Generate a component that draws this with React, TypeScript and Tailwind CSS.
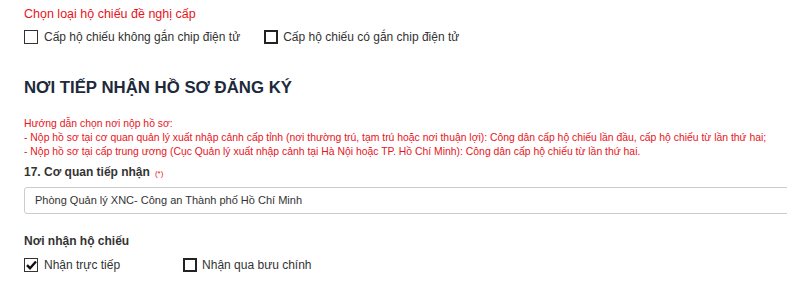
import React from "react";

function Box({ checked = false, thick = false }: { checked?: boolean; thick?: boolean }) {
  return (
    <span
      className={
        "relative inline-flex h-[14px] w-[14px] shrink-0 items-center justify-center bg-white " +
        (thick ? "border-2 border-[#222]" : "border border-[#333]")
      }
    >
      {checked && (
        <svg width="11" height="10" viewBox="0 0 11 10" className="absolute left-[1px] top-[1px]">
          <path d="M1 5.2 L4 8.2 L10 1.5" fill="none" stroke="#111" strokeWidth="2.4" />
        </svg>
      )}
    </span>
  );
}

export default function App() {
  return (
    <div
      className="h-[288px] w-[787px] overflow-hidden bg-white pl-[24px] text-[#333]"
      style={{ fontFamily: '"Liberation Sans", Arial, sans-serif' }}
    >
      <div className="pt-[5px] text-[12.5px] leading-[18px] text-[#e8141b]">Chọn loại hộ chiếu đề nghị cấp</div>
      <div className="mt-[6px] flex items-center text-[12px] leading-[16px]">
        <label className="flex items-center gap-[6px]">
          <Box />
          <span>Cấp hộ chiếu không gắn chip điện tử</span>
        </label>
        <label className="ml-[24px] flex items-center gap-[5px]">
          <Box thick />
          <span>Cấp hộ chiếu có gắn chip điện tử</span>
        </label>
      </div>

      <h2 className="mt-[33px] text-[16.8px] font-bold leading-[20px] text-[#1d2a3b]">NƠI TIẾP NHẬN HỒ SƠ ĐĂNG KÝ</h2>

      <div className="mt-[19px] whitespace-nowrap text-[10.4px] leading-[14px] text-[#e8141b]">
        <div>Hướng dẫn chọn nơi nộp hồ sơ:</div>
        <div>
          - Nộp hồ sơ tại cơ quan quản lý xuất nhập cảnh cấp tỉnh (nơi thường trú, tạm trú hoặc nơi thuận lợi): Công dân cấp hộ chiếu lần đầu, cấp hộ chiếu từ lần thứ hai;
        </div>
        <div>
          - Nộp hồ sơ tại cấp trung ương (Cục Quản lý xuất nhập cảnh tại Hà Nội hoặc TP. Hồ Chí Minh): Công dân cấp hộ chiếu từ lần thứ hai.
        </div>
      </div>

      <div className="mt-[5px] flex items-baseline text-[12px] font-bold leading-[16px] text-[#333]">
        <span>17. Cơ quan tiếp nhận</span>
        <span className="ml-[5px] text-[8px] font-normal text-[#e8141b]">(*)</span>
      </div>

      <div className="mt-[5px] flex h-[27px] w-[790px] items-center rounded-[3px] border border-[#ccc] pl-[10px] text-[11px] text-[#333]">
        Phòng Quản lý XNC- Công an Thành phố Hồ Chí Minh
      </div>

      <div className="mt-[19px] text-[12px] font-bold leading-[16px] text-[#333]">Nơi nhận hộ chiếu</div>
      <div className="mt-[8px] flex items-center text-[12px] leading-[16px]">
        <label className="flex items-center gap-[6px]">
          <Box checked />
          <span>Nhận trực tiếp</span>
        </label>
        <label className="ml-[63px] flex items-center gap-[5px]">
          <Box thick />
          <span>Nhận qua bưu chính</span>
        </label>
      </div>
    </div>
  );
}
